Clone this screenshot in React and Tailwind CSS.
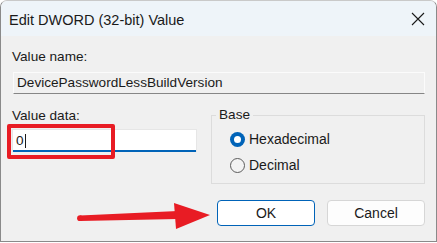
import React from 'react';

const font = { fontFamily: '"Liberation Sans", Arial, sans-serif' };

function CloseIcon() {
  return (
    <svg width="14" height="14" viewBox="0 0 14 14" className="block">
      <path d="M1 1 L13 13 M13 1 L1 13" stroke="#1a1a1a" strokeWidth="1.1" fill="none" />
    </svg>
  );
}

function Radio({ checked, label }) {
  return (
    <div className="flex items-center h-[26px]">
      {checked ? (
        <span className="w-[15px] h-[15px] rounded-full bg-[#0063b8] flex items-center justify-center">
          <span className="w-[7px] h-[7px] rounded-full bg-white" />
        </span>
      ) : (
        <span className="w-[15px] h-[15px] rounded-full border border-[#5c5c5c] bg-[#f3f3f3]" />
      )}
      <span className="ml-[4px] text-[14px] text-[#1a1a1a]">{label}</span>
    </div>
  );
}

export default function App() {
  return (
    <div className="w-[437px] h-[243px] bg-white" style={font}>
      <div className="relative w-[437px] h-[242px] border border-[#8a8a8a] border-t-[#c9c9c9] rounded-t-[7px] bg-[#f0f0f0] overflow-hidden">
        {/* title bar */}
        <div className="h-[35px] bg-[#eef4f9] flex items-center justify-between pl-[8px] pr-[11px]">
          <span className="text-[14.5px] text-[#1a1a1a] leading-[20px] mt-[2px]">Edit DWORD (32-bit) Value</span>
          <CloseIcon />
        </div>

        <div className="pl-[11px] pr-[11px] pt-[12px] text-[13.6px] text-[#1a1a1a]">
          <div className="leading-[18px] h-[18px]">Value name:</div>
          <div className="mt-[6px] ml-[1px] w-[412px] h-[22px] border border-[#fbfbfb] border-b-[#868686] bg-[#f0f0f0] flex items-center pl-[3px]">
            DevicePasswordLessBuildVersion
          </div>

          <div className="mt-[13px] flex">
            <div className="w-[185px]">
              <div className="leading-[18px] h-[18px]">Value data:</div>
              <div className="relative mt-[4px] w-[185px] h-[23px] bg-white border border-[#e6e6e6] border-b-0 flex items-center pl-[3px]">
                <span>0</span>
                <span className="w-px h-[14px] bg-[#1a1a1a] ml-[1px]" />
                <div className="absolute left-0 right-0 bottom-0 h-[2px] bg-[#0063b8]" />
                <div className="absolute left-[-6px] top-[-6px] w-[108px] h-[35px] border-[4px] border-[#e81c24] rounded-[2px]" />
              </div>
            </div>

            <fieldset className="ml-[14px] mt-[-1px] w-[216px] h-[78px] border border-[#dcdcdc]">
              <legend className="ml-[4px] px-[3px] leading-[18px]">Base</legend>
              <div className="pl-[18px] pt-[2px]">
                <Radio checked label="Hexadecimal" />
                <Radio label="Decimal" />
              </div>
            </fieldset>
          </div>

          <div className="mt-[16px] flex justify-end gap-[12px]">
            <button className="w-[98px] h-[26px] bg-white border border-[#0063b8] rounded-[4px] text-[14px] text-[#1a1a1a]">
              OK
            </button>
            <button className="w-[98px] h-[26px] bg-[#fdfdfd] border border-[#d6d6d6] rounded-[4px] text-[14px] text-[#1a1a1a]">
              Cancel
            </button>
          </div>
        </div>

        {/* red annotation arrow */}
        <svg className="absolute left-0 top-0 pointer-events-none" width="437" height="243" viewBox="-1 -1 437 243">
          <path d="M78 213.5 L176 209 L176 217 L78 219 Z" fill="#e81c24" />
          <circle cx="78" cy="216.2" r="2.9" fill="#e81c24" />
          <path d="M172 201 L208 213 L174 227 Z" fill="#e81c24" />
        </svg>
      </div>
    </div>
  );
}
